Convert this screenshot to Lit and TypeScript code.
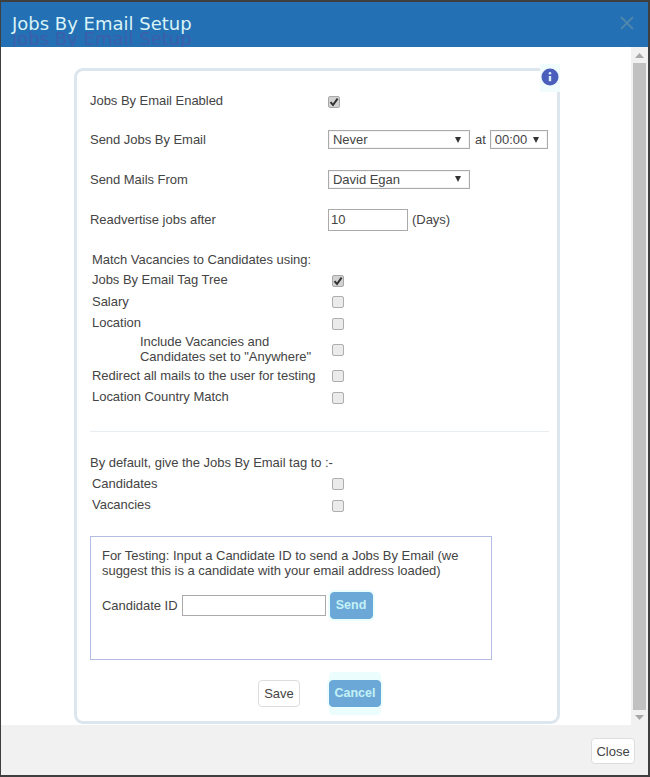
import { LitElement, html, css } from "lit";
import { customElement } from "lit/decorators.js";

@customElement("app-root")
export class AppRoot extends LitElement {
  static styles = css`
    :host { display: block; width: 650px; height: 777px; overflow: hidden; font-family: "Liberation Sans", Arial, sans-serif; font-size: 13px; color: #444; letter-spacing: -0.03px; }
    * { box-sizing: border-box; }
    .frame { height: 777px; background: #3f3f3f; padding: 2px 2px 2px 1px; display: flex; flex-direction: column; }
    .header { height: 45px; flex: none; background: #2470b4; display: flex; align-items: flex-start; justify-content: space-between; padding: 11px 13px 0 11px; overflow: hidden; }
    .title { font-family: "DejaVu Sans", Verdana, sans-serif; font-size: 18px; line-height: 22px; letter-spacing: 0; color: #d9f3f7; text-shadow: 0 15px 0 #3c5fab; }
    .x { display: block; margin-top: 2px; }
    .main { flex: 1; min-height: 0; display: flex; background: #fff; }
    .content { flex: 1; min-width: 0; padding: 21px 0 0 73px; }
    .scroll { flex: none; width: 17px; background: #f1f1f1; display: flex; flex-direction: column; align-items: center; padding: 6px 2px 5px 2px; gap: 5px; }
    .thumb { flex: 1; width: 13px; background: #c1c1c1; }
    .panel { position: relative; width: 486px; height: 656px; border: 3px solid #dde5ed; border-radius: 9px; padding: 10px 9px 0 13px; background: #fff; }
    .info { position: absolute; right: -3px; top: -7px; width: 20px; height: 28px; background: #f1fcfd; display: flex; justify-content: center; padding-top: 4px; }
    .row { display: grid; grid-template-columns: 238px 1fr; align-items: center; height: 40px; }
    .row.short { height: 39px; }
    .inline { display: flex; align-items: center; gap: 4px; }
    .at { margin-left: 1px; }
    .select { height: 19px; border: 1px solid #aaa; padding: 0 8px 0 4px; display: flex; align-items: center; justify-content: space-between; background: #fff; box-shadow: inset 0 0 0 1px #f4f4f4; }
    .select.wide { width: 142px; }
    .select.time { width: 58px; }
    .caret { width: 0; height: 0; border-left: 3.5px solid transparent; border-right: 3.5px solid transparent; border-top: 6px solid #333; }
    .input { border: 1px solid #aaa; height: 22px; width: 80px; padding: 0 2px; display: block; font: inherit; color: inherit; background: #fff; margin: 0; outline: none; }
    .days { margin-top: 1px; }
    .heading { height: 20px; margin: 10px 0 0 2px; display: flex; align-items: center; }
    .crow { display: grid; grid-template-columns: 240px 1fr; align-items: center; height: 21.5px; padding-left: 2px; }
    .crow.tall { height: 31px; }
    .crow.tall > span { padding-left: 48px; line-height: 15px; }
    .cb { width: 12px; height: 12px; border: 1px solid #aeaeae; border-radius: 2px; background: #ebebeb; display: flex; align-items: center; justify-content: center; margin-top: 2px; }
    .cb.on { background: #d2d2d2; border-color: #a8a8a8; }
    hr { border: 0; border-top: 1px solid #e8edf2; margin: 23px 0 0 0; height: 0; width: 459px; }
    .default { height: 20px; margin-top: 21px; display: flex; align-items: center; }
    .test { width: 402px; height: 124px; border: 1px solid #b3bce2; margin-top: 20px; padding: 11px 11px 0 11px; line-height: 15px; }
    .test p { margin: 0; }
    .idrow { display: flex; align-items: center; gap: 4px; margin-top: 14px; }
    .idrow .input { width: 144px; height: 21px; margin-right: 0; }
    button { font: inherit; border-radius: 4px; padding: 0; margin: 0; }
    .btn-blue { background: #6ba8d8; color: #c4f1f5; border: 1px solid #69a9d8; font-weight: 700; font-size: 12.5px; height: 27px; }
    .send { width: 43px; box-shadow: 0 0 0 2px #ecfdfd; }
    .actions { display: flex; margin: 20px 0 0 168px; }
    .save { width: 42px; height: 27px; background: #fff; border: 1px solid #ddd; color: #444; }
    .cancel { width: 52px; margin-left: 29px; box-shadow: 0 -8px 0 0 #ecfdfd, 0 8px 0 0 #ecfdfd, 0 0 0 2px #ecfdfd; }
    .footer { height: 50px; flex: none; background: #f1f1f1; display: flex; justify-content: flex-end; align-items: flex-start; padding: 13px 13px 0 0; }
    .close { width: 44px; height: 26px; background: #fff; border: 1px solid #ddd; color: #444; }
  `;

  private cb(on = false) {
    return html`<div class="cb ${on ? "on" : ""}">
      ${on ? html`<svg width="10" height="10" viewBox="0 0 10 10"><path d="M1.5 5.2 L4 8 L8.6 1.6" fill="none" stroke="#333" stroke-width="2"/></svg>` : ""}
    </div>`;
  }

  private crow(label: string, on = false) {
    return html`<div class="crow"><span>${label}</span>${this.cb(on)}</div>`;
  }

  render() {
    return html`
      <div class="frame">
        <div class="header">
          <div class="title">Jobs By Email Setup</div>
          <svg class="x" width="16" height="16" viewBox="0 0 16 16"><path d="M2 2 L14 14 M14 2 L2 14" stroke="#4d86ad" stroke-width="2" fill="none"/></svg>
        </div>
        <div class="main">
          <div class="content">
            <div class="panel">
              <div class="info">
                <svg width="18" height="18" viewBox="0 0 18 18"><circle cx="9" cy="9" r="8.5" fill="#4a5fbb"/><circle cx="9" cy="5.2" r="1.3" fill="#d8eef8"/><path d="M9 8 V13.2" stroke="#d8eef8" stroke-width="2.4"/></svg>
              </div>
              <div class="row short"><span>Jobs By Email Enabled</span>${this.cb(true)}</div>
              <div class="row short">
                <span>Send Jobs By Email</span>
                <div class="inline">
                  <div class="select wide"><span>Never</span><i class="caret"></i></div>
                  <span class="at">at</span>
                  <div class="select time"><span>00:00</span><i class="caret"></i></div>
                </div>
              </div>
              <div class="row">
                <span>Send Mails From</span>
                <div class="select wide"><span>David Egan</span><i class="caret"></i></div>
              </div>
              <div class="row">
                <span>Readvertise jobs after</span>
                <div class="inline days"><input class="input" value="10" /><span>(Days)</span></div>
              </div>

              <div class="heading">Match Vacancies to Candidates using:</div>
              ${this.crow("Jobs By Email Tag Tree", true)}
              ${this.crow("Salary")}
              ${this.crow("Location")}
              <div class="crow tall"><span>Include Vacancies and<br />Candidates set to "Anywhere"</span>${this.cb()}</div>
              ${this.crow("Redirect all mails to the user for testing")}
              ${this.crow("Location Country Match")}
              <hr />
              <div class="default">By default, give the Jobs By Email tag to :-</div>
              ${this.crow("Candidates")}
              ${this.crow("Vacancies")}

              <div class="test">
                <p>For Testing: Input a Candidate ID to send a Jobs By Email (we suggest this is a candidate with your email address loaded)</p>
                <div class="idrow">
                  <span>Candidate ID</span>
                  <input class="input" />
                  <button class="btn-blue send">Send</button>
                </div>
              </div>
              <div class="actions">
                <button class="save">Save</button>
                <button class="btn-blue cancel">Cancel</button>
              </div>
            </div>
          </div>
          <div class="scroll">
            <svg width="9" height="5" viewBox="0 0 9 5"><path d="M4.5 0 L9 5 H0 Z" fill="#a8a8a8"/></svg>
            <div class="thumb"></div>
            <svg width="9" height="5" viewBox="0 0 9 5"><path d="M0 0 H9 L4.5 5 Z" fill="#a8a8a8"/></svg>
          </div>
        </div>
        <div class="footer"><button class="close">Close</button></div>
      </div>
    `;
  }
}
